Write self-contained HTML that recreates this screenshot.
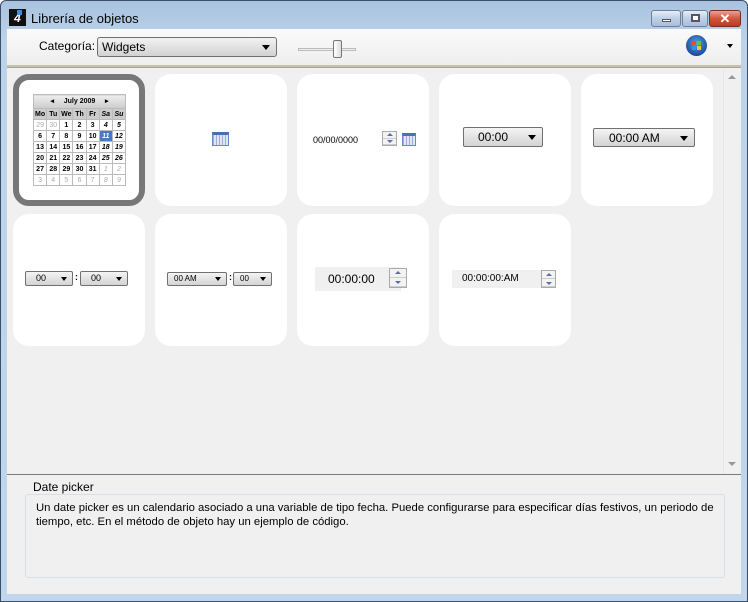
<!DOCTYPE html>
<html><head><meta charset="utf-8">
<style>
*{box-sizing:border-box;margin:0;padding:0}
body{width:748px;height:602px;overflow:hidden;font-family:"Liberation Sans",sans-serif;font-size:12px;color:#000;background:#fff}
.win{position:absolute;left:0;top:0;width:748px;height:602px;background:linear-gradient(#a9c3df,#bcd3ea 40px,#c0d6ec);border:1px solid #3b4f6a;border-radius:6px 6px 0 0}
.title{position:absolute;left:30px;top:10px;font-size:13px;color:#000}
.logo{position:absolute;left:8px;top:8px;width:17px;height:17px;background:#111;color:#fff;font-weight:bold;font-size:12px;line-height:19px;text-align:center;font-style:italic}
.logo:after{content:"";position:absolute;left:8px;top:1px;width:5px;height:5px;background:#3a8ee6}
.btn{position:absolute;top:9px;height:17px;border:1px solid #6f7f95;border-radius:3px;background:linear-gradient(#e6eef8,#bccfe6 50%,#a9bfdc)}
.client{position:absolute;left:6px;top:28px;width:734px;height:565px;background:#f0f0f0}
.tb{position:absolute;left:0;top:0;width:734px;height:36px;background:linear-gradient(#fafafa,#eeeeee)}
.sep{position:absolute;left:0;top:36px;width:734px;height:3px;background:#c7c1ae;border-bottom:1px solid #a9a48f}
.sel{position:absolute;left:90px;top:8px;width:180px;height:20px;border:1px solid #707070;border-radius:3px;background:linear-gradient(#f2f2f2,#e2e2e2 50%,#d2d2d2);padding:2px 4px;font-size:12px}
.arr{position:absolute;width:0;height:0;border-left:4px solid transparent;border-right:4px solid transparent;border-top:5px solid #000}
.tile{position:absolute;width:132px;height:132px;background:#fff;border-radius:16px}
.cal{position:absolute;left:20px;top:20px;width:93px;border-collapse:collapse;font-size:7px;text-align:center;font-weight:bold}
.cal td{border:1px solid #bbb;height:11px;width:13px;padding:0;line-height:9px}
.cal .g{color:#aaa;font-weight:normal}
.cal .i{font-style:italic}
.dd{position:absolute;border:1px solid #707070;border-radius:2px;background:linear-gradient(#f4f4f4,#e3e3e3 50%,#d4d4d4);font-size:12px}
.spin{position:absolute;width:15px;border:1px solid #aaa;background:#f3f3f3}
.spin div{height:50%;border-bottom:1px solid #ccc;position:relative}
.spin div:first-child:after{content:"";position:absolute;left:50%;top:50%;margin:-2px 0 0 -3px;border-left:3px solid transparent;border-right:3px solid transparent;border-bottom:3px solid #5a6fa8}
.spin div:last-child:after{content:"";position:absolute;left:50%;top:50%;margin:-1px 0 0 -3px;border-left:3px solid transparent;border-right:3px solid transparent;border-top:3px solid #5a6fa8}
.calico{position:absolute;width:17px;height:14px;background:repeating-linear-gradient(90deg,#aac 0 1px,#dde6f6 1px 3px);border:1px solid #6d89c2;border-top:3px solid #4a6fb5}
</style></head><body>
<div class="win">
 <div class="logo">4</div>
 <div class="title">Librería de objetos</div>
 <div class="btn" style="left:650px;width:30px"><div style="position:absolute;left:10px;top:8px;width:9px;height:3px;background:#fff;border:1px solid #556"></div></div>
 <div class="btn" style="left:681px;width:26px"><div style="position:absolute;left:8px;top:3px;width:9px;height:8px;border:2px solid #556;background:#fff"></div></div>
 <div class="btn" style="left:708px;width:32px;background:linear-gradient(#e8a593,#d0553c 50%,#c23a22);border-color:#7a2a1e;color:#fff;font-weight:bold;text-align:center;line-height:15px;font-size:13px">✕</div>
 <div class="client">
  <div class="tb">
   <div style="position:absolute;left:32px;top:10px">Categoría:</div>
   <div class="sel">Widgets<div class="arr" style="right:6px;top:7px"></div></div>
   <div style="position:absolute;left:291px;top:19px;width:58px;height:3px;border:1px solid #bbb;background:#eee"></div>
   <div style="position:absolute;left:326px;top:11px;width:9px;height:18px;border:1px solid #777;border-radius:2px;background:linear-gradient(90deg,#fff,#ddd)"></div>
   <div style="position:absolute;left:679px;top:6px;width:21px;height:21px;border-radius:50%;background:radial-gradient(circle at 50% 40%,#5aa0e8,#1b4f9a 70%,#0b2d5c)">
    <svg width="21" height="21" viewBox="0 0 21 21"><rect x="6" y="6" width="4" height="4" fill="#e94b2b"/><rect x="11" y="6" width="4" height="4" fill="#6cc03c"/><rect x="6" y="11" width="4" height="4" fill="#3c8ee8"/><rect x="11" y="11" width="4" height="4" fill="#f6c12d"/></svg>
   </div>
   <div class="arr" style="left:720px;top:15px;border-width:4px 3px 0 3px"></div>
  </div>
  <div class="sep"></div>
  <div style="position:absolute;left:716px;top:40px;width:17px;height:405px;background:#f0f0f0;border-left:1px solid #e6e6e6">
   <div class="arr" style="left:4px;top:6px;border-top:0;border-bottom:4px solid #999"></div>
   <div class="arr" style="left:4px;top:393px;border-top:4px solid #999"></div>
  </div>
  <div style="position:absolute;left:0;top:445px;width:734px;height:1px;background:#7a7a7a"></div>

  <div class="tile" style="left:6px;top:45px;border:6px solid #777">
   <table class="cal" style="left:14px;top:14px">
    <tr><td colspan="7" style="height:14px;background:linear-gradient(#eee,#ccc);font-size:7px;position:relative">◂&nbsp;&nbsp;&nbsp;&nbsp;&nbsp;July 2009&nbsp;&nbsp;&nbsp;&nbsp;&nbsp;▸</td></tr>
    <tr style="background:#ccc"><td>Mo</td><td>Tu</td><td>We</td><td>Th</td><td>Fr</td><td class="i">Sa</td><td class="i">Su</td></tr>
    <tr><td class="g">29</td><td class="g">30</td><td>1</td><td>2</td><td>3</td><td class="i">4</td><td class="i">5</td></tr>
    <tr><td>6</td><td>7</td><td>8</td><td>9</td><td>10</td><td class="i" style="background:#4a78c2;color:#fff">11</td><td class="i">12</td></tr>
    <tr><td>13</td><td>14</td><td>15</td><td>16</td><td>17</td><td class="i">18</td><td class="i">19</td></tr>
    <tr><td>20</td><td>21</td><td>22</td><td>23</td><td>24</td><td class="i">25</td><td class="i">26</td></tr>
    <tr><td>27</td><td>28</td><td>29</td><td>30</td><td>31</td><td class="g i">1</td><td class="g i">2</td></tr>
    <tr><td class="g">3</td><td class="g">4</td><td class="g">5</td><td class="g">6</td><td class="g">7</td><td class="g i">8</td><td class="g i">9</td></tr>
   </table>
  </div>
  <div class="tile" style="left:148px;top:45px"><div class="calico" style="left:57px;top:58px"></div></div>
  <div class="tile" style="left:290px;top:45px">
   <div style="position:absolute;left:16px;top:61px;font-size:9px">00/00/0000</div>
   <div class="spin" style="left:85px;top:57px;height:15px"><div></div><div></div></div>
   <div class="calico" style="left:105px;top:59px;width:14px;height:13px"></div>
  </div>
  <div class="tile" style="left:432px;top:45px">
   <div class="dd" style="left:24px;top:53px;width:80px;height:20px;padding:2px 0 0 14px">00:00<div class="arr" style="right:6px;top:7px"></div></div>
  </div>
  <div class="tile" style="left:574px;top:45px">
   <div class="dd" style="left:12px;top:54px;width:102px;height:19px;padding:2px 0 0 15px">00:00 AM<div class="arr" style="right:6px;top:7px"></div></div>
  </div>
  <div class="tile" style="left:6px;top:185px">
   <div class="dd" style="left:12px;top:57px;width:48px;height:15px;font-size:9px;padding:1px 0 0 10px">00<div class="arr" style="right:5px;top:5px;border-width:4px 3px 0 3px"></div></div>
   <div style="position:absolute;left:62px;top:58px;font-size:9px;font-weight:bold">:</div>
   <div class="dd" style="left:67px;top:57px;width:48px;height:15px;font-size:9px;padding:1px 0 0 10px">00<div class="arr" style="right:5px;top:5px;border-width:4px 3px 0 3px"></div></div>
  </div>
  <div class="tile" style="left:148px;top:185px">
   <div class="dd" style="left:12px;top:58px;width:60px;height:14px;font-size:8px;padding:1px 0 0 6px">00 AM<div class="arr" style="right:5px;top:4px;border-width:4px 3px 0 3px"></div></div>
   <div style="position:absolute;left:74px;top:58px;font-size:9px;font-weight:bold">:</div>
   <div class="dd" style="left:78px;top:58px;width:39px;height:14px;font-size:8px;padding:1px 0 0 6px">00<div class="arr" style="right:5px;top:4px;border-width:4px 3px 0 3px"></div></div>
  </div>
  <div class="tile" style="left:290px;top:185px">
   <div style="position:absolute;left:18px;top:53px;width:86px;height:24px;background:#f0f0f0;padding:5px 0 0 13px;font-size:12px">00:00:00</div>
   <div class="spin" style="left:92px;top:54px;height:20px;width:18px"><div></div><div></div></div>
  </div>
  <div class="tile" style="left:432px;top:185px">
   <div style="position:absolute;left:13px;top:56px;width:96px;height:18px;background:#f0f0f0;padding:3px 0 0 10px;font-size:10px">00:00:00:AM</div>
   <div class="spin" style="left:102px;top:56px;height:18px"><div></div><div></div></div>
  </div>

  <div style="position:absolute;left:18px;top:465px;width:700px;height:84px;border:1px solid #d5dfe5;border-radius:3px"></div>
  <div style="position:absolute;left:23px;top:451px;background:#f0f0f0;padding:0 3px">Date picker</div>
  <div style="position:absolute;left:29px;top:472px;width:690px;line-height:14px;font-size:11.3px">Un date picker es un calendario asociado a una variable de tipo fecha. Puede configurarse para especificar días festivos, un periodo de tiempo, etc. En el método de objeto hay un ejemplo de código.</div>
 </div>
</div>
</body></html>
